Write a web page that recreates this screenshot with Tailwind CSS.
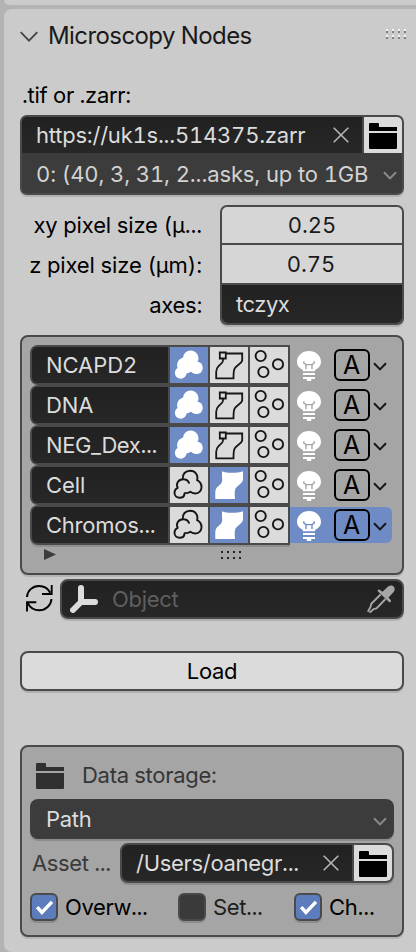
<!DOCTYPE html>
<html lang="en">
<head>
<meta charset="utf-8">
<title>Microscopy Nodes</title>
<script src="https://cdn.jsdelivr.net/npm/@tailwindcss/browser@4"></script>
</head>
<body class="w-[416px] h-[952px] overflow-hidden bg-[#b3b3b3] font-['Inter','Liberation_Sans',sans-serif] text-[22px] leading-[26px] tracking-[-0.3px] tabular-nums text-black whitespace-nowrap">
<svg class="hidden">
  <symbol id="folder" viewBox="0 0 28 26"><path d="M0 1a1 1 0 0 1 1-1h8a1 1 0 0 1 1 1v3h18v4H0zM0 10h28v15a1 1 0 0 1-1 1H1a1 1 0 0 1-1-1z" fill="currentColor"/></symbol>
  <symbol id="cross" viewBox="0 0 16 16"><path d="M.7.7l14.6 14.6M15.3.7L.7 15.3" stroke="#b4b4b4" stroke-width="1.6" fill="none"/></symbol>
  <symbol id="down" viewBox="0 0 14 9"><path d="M1 1.2l6 6.2 6-6.2" stroke="currentColor" stroke-width="2" fill="none"/></symbol>
  <symbol id="cloud-fill" viewBox="0 0 38 36"><g fill="#fff"><circle cx="20.7" cy="11.3" r="7.8"/><circle cx="14.5" cy="18" r="7.5"/><circle cx="26.5" cy="20.7" r="6.3"/><circle cx="10.7" cy="25.8" r="5.9"/><path d="M12 12h14v12l-6 1.2-8 3z"/></g></symbol>
  <symbol id="cloud-line" viewBox="0 0 38 36"><path d="M12.700 12.300C12.200 7 15.500 3.700 20.200 3.700c5 0 8.300 4.300 6.900 9.500 2.700 1.300 4.400 4 4.400 7 0 3.600-2.600 6.300-6 6.300-2 0-3.700-.8-5.200-1.800-1.900 1.200-3.700 1.600-5.700 1.400-.1 2.800-2.200 4.600-4.900 4.600-3 0-5.200-2.200-5.200-5 0-2.300 1.200-4 3.200-4.900C5.500 16.500 8.500 12.500 13 12.300c2.800-.1 5 1.200 6 3.500" fill="none" stroke="#161616" stroke-width="1.900" stroke-linecap="round" stroke-linejoin="round"/></symbol>
  <symbol id="surf-line" viewBox="0 0 38 36"><path d="M15.500 6.500h16.700v7c-.8 3.500-6.500 5-8 9-.7 2.500-.7 5.300-.7 8.800H6.200v-6.500c0-2.300.8-4.300 2.600-6 3-2.600 5-4 4.200-8M9.800 5.500h6v6h-6z" fill="none" stroke="#161616" stroke-width="1.800"/></symbol>
  <symbol id="surf-fill" viewBox="0 0 38 36"><path d="M12 4.200c4.500 2 15 2 21 0v8.300c-.5 4.500-6.500 6-7.800 10-.7 2.500-.5 6-.2 9.500H5.300v-6.500c0-3 1-4.700 3.200-6.500 3-2.600 4.500-4.500 3.500-8.500z" fill="#fff"/></symbol>
  <symbol id="points" viewBox="0 0 38 36"><g fill="none" stroke="#161616" stroke-width="1.900"><circle cx="10.700" cy="9" r="5.100"/><circle cx="28" cy="17.300" r="5.100"/><circle cx="13.400" cy="25" r="5.100"/></g></symbol>
  <symbol id="bulb" viewBox="0 0 24 30"><path d="M12 0c6.800 0 12 4.800 12 10.800 0 3.300-1.500 5.200-3.600 6.700-1.100.8-2.400 1-2.400 2.700H6c0-1.700-1.300-1.900-2.400-2.700C1.500 16 0 14.100 0 10.800 0 4.800 5.200 0 12 0zM6 22h12v2H6zM6 26h12v2h-3.800v1.900H9.800V28H6z" fill="#fff"/><path d="M6.800 10.200v1.800l2.200 1.600V18M17.200 10.200v1.800L15 13.600V18M9 13.600h6" fill="none" stroke="currentColor" stroke-width="1.400"/></symbol>
  <symbol id="tick" viewBox="0 0 24 24"><path d="M5.200 12.200l4.700 5.200L20 6.800" fill="none" stroke="#fff" stroke-width="3.400"/></symbol>
</svg>

<div class="h-[5px] ml-1 bg-[#cbcbcb] rounded-bl-[6px]"></div>

<main class="mt-1 ml-1 h-[943px] pl-4 pr-3 bg-[#cbcbcb] rounded-l-[8px]">
  <header class="h-[66px] flex items-start">
    <svg class="w-[18px] h-[11px] mt-[22px]" viewBox="0 0 18 11"><path d="M.7 1l8.300 8.600L17.300 1" fill="none" stroke="#444" stroke-width="1.800"/></svg>
    <h1 class="ml-[10px] mt-[12px] text-[24px] leading-[30px] tracking-[-0.58px] text-[#1a1a1a]">Microscopy Nodes</h1>
    <svg class="ml-auto -mr-[2px] w-[20px] h-[10px] mt-[20px]" viewBox="0 0 20 10" shape-rendering="crispEdges">
      <path d="M0 1h20M0 7h20" stroke="#f4f4f4" stroke-width="2" stroke-dasharray="2 4"/>
      <path d="M0 3h20M0 9h20" stroke="#808080" stroke-width="2" stroke-dasharray="2 4"/>
    </svg>
  </header>

  <div class="h-10 pt-[7px] pl-[2px]">.tif or .zarr:</div>

  <section class="h-20 rounded-[7px] border-2 border-[#4a4a4a] bg-[#3c3c3c] text-[#dcdcdc] overflow-hidden shadow-[0_2px_0_#b0b0b0]">
    <div class="h-9 flex items-center bg-linear-to-b from-[#212121] to-[#272727]">
      <span class="pl-[14px] w-[311px] tracking-[-0.23px]">https://uk1s...514375.zarr</span>
      <svg class="size-4"><use href="#cross"/></svg>
      <div class="ml-auto w-[40px] h-9 border-l-2 border-[#4a4a4a] bg-[#dbdbdb] text-black pt-[6px] pl-[5px]"><svg class="w-[28px] h-[26px]"><use href="#folder"/></svg></div>
    </div>
    <div class="h-10 flex items-center text-[#d2d2d2]">
      <span class="pl-[14px] w-[361px] pt-[1px] tracking-[-0.12px]">0: (40, 3, 31, 2...asks, up to 1GB</span>
      <svg class="w-[14px] h-[9px] mt-[5px] text-[#8a8a8a]"><use href="#down"/></svg>
    </div>
  </section>

  <section class="mt-[10px] flex h-[120px]">
    <div class="w-[182px] text-right">
      <div class="h-10 pt-[7px] tracking-[-0.15px]">xy pixel size (µ...</div>
      <div class="h-10 pt-[7px] tracking-[-0.13px]">z pixel size (µm):</div>
      <div class="h-10 pt-[7px]">axes:</div>
    </div>
    <div class="ml-[18px] w-[184px] h-[120px] rounded-[7px] border-2 border-[#4a4a4a] overflow-hidden bg-[#d6d6d6] shadow-[0_2px_0_#b0b0b0] text-[#1a1a1a]">
      <div class="h-[38px] pt-[5px] text-center tracking-[-0.1px] border-b-2 border-[#4a4a4a]">0.25</div>
      <div class="h-[40px] pt-[6px] pr-[2px] text-center tracking-[-0.1px] border-b-2 border-[#4a4a4a]">0.75</div>
      <div class="h-[38px] pt-[6px] pl-[14px] tracking-[-0.5px] bg-linear-to-b from-[#212121] to-[#272727] text-[#dcdcdc]">tczyx</div>
    </div>
  </section>

  <section class="mt-[10px] h-[240px] rounded-[8px] border-2 border-[#4a4a4a] bg-[#a5a5a5] pt-2 pl-2 shadow-[0_2px_0_#b4b4b4]">
    <div id="rows" class="shadow-[0_2px_0_#8f8f8f] w-[260px] rounded-bl-[8px]"></div>
    <div class="flex items-start pt-[4px]">
      <svg class="ml-[14px] w-[12px] h-[11px]" viewBox="0 0 12 11"><path d="M0 0l12 5.500L0 11z" fill="#3c3c3c"/></svg>
      <svg class="ml-[165px] mt-[2px] w-[20px] h-[8px]" viewBox="0 0 20 8" shape-rendering="crispEdges"><path d="M0 1h20M0 7h20" stroke="#222" stroke-width="2" stroke-dasharray="2 4"/></svg>
    </div>
  </section>

  <section class="mt-1 flex h-10">
    <svg class="ml-[5px] mt-[5px] w-[28px] h-[28px]" viewBox="0 0 28 28"><path d="M2 13C2.300 6.800 7.500 2 14 2c4.800 0 9 2.500 11.200 6.800M26.700 1v9H17M26.500 15c-.4 6.300-5.700 11.300-12.300 11.300-4.800 0-9-2.500-11.200-6.800M2 27.500v-9.300h9.300" fill="none" stroke="#000" stroke-width="1.900"/></svg>
    <div class="ml-[7px] w-[344px] h-10 flex rounded-[8px] border-2 border-[#4a4a4a] bg-linear-to-b from-[#212121] to-[#272727] shadow-[0_2px_0_#b0b0b0]">
      <svg class="ml-[8px] mt-[4px] w-[28px] h-[28px]" viewBox="0 0 28 28"><path d="M11 3v14h14M11 17l-8 8" fill="none" stroke="#dcdcdc" stroke-width="6" stroke-linecap="round" stroke-linejoin="round"/></svg>
      <span class="ml-[14px] mt-[5px] text-[#5f5f5f]">Object</span>
      <svg class="ml-auto mr-[7px] mt-[4px] w-[28px] h-[28px]" viewBox="0 0 28 28"><path d="M15.500 6.800L20.500 2c2.200-1.800 4.600-2 6.100-.6 1.600 1.600 1.400 4.100-.4 6.100l-4.700 5 2.200 2.600c1 1.300-.3 2.700-1.700 1.800L11 6.500c-.9-1.300.4-2.500 1.600-1.700z" fill="#a6a6a6"/><path d="M13.600 9.500L4.300 18.700l-.8 3.300L.8 26.800M18.500 14l-9 9.300-2.900.7-4 3.700" fill="none" stroke="#a6a6a6" stroke-width="1.900"/></svg>
    </div>
  </section>

  <button class="mt-8 block w-full h-10 rounded-[8px] border-2 border-[#4a4a4a] bg-[#dbdbdb] shadow-[0_2px_0_#b0b0b0]">Load</button>

  <section class="mt-[54px] h-[192px] rounded-[8px] border-2 border-[#4a4a4a] bg-[#a5a5a5] px-2 shadow-[0_2px_0_#b4b4b4]">
    <div class="h-[52px] flex text-[#303030]">
      <svg class="ml-[6px] mt-[16px] w-[28px] h-[26px]"><use href="#folder"/></svg>
      <span class="ml-[18px] mt-[15px] text-[#363636]">Data storage:</span>
    </div>
    <div class="h-10 flex items-center rounded-[8px] bg-[#3c3c3c] text-[#dcdcdc] shadow-[0_2px_0_#8c8c8c]">
      <span class="ml-4">Path</span>
      <svg class="ml-auto mr-[7px] mt-[4px] w-[14px] h-[9px] text-[#8a8a8a]"><use href="#down"/></svg>
    </div>
    <div class="mt-1 h-10 flex">
      <span class="w-[90px] pl-[2px] pt-[7px] tracking-[-0.35px] text-[#3a3a3a]">Asset ...</span>
      <div class="w-[274px] h-10 flex items-center rounded-[8px] border-2 border-[#4a4a4a] bg-linear-to-b from-[#212121] to-[#272727] text-[#dcdcdc] overflow-hidden shadow-[0_2px_0_#8c8c8c]">
        <span class="pl-[14px] w-[201px]">/Users/oanegr...</span>
        <svg class="size-4"><use href="#cross"/></svg>
        <div class="ml-auto w-[40px] h-9 border-l-2 border-[#4a4a4a] bg-[#dbdbdb] text-black pt-[6px] pl-[5px]"><svg class="w-[28px] h-[26px]"><use href="#folder"/></svg></div>
      </div>
    </div>
    <div class="mt-[10px] h-7 flex items-center">
      <div class="size-7 rounded-[6px] border-2 border-[#4a4a4a] bg-[#5c7cbc] shadow-[0_2px_0_#8c8c8c]"><svg class="size-6"><use href="#tick"/></svg></div>
      <span class="ml-[7px] w-[113px] tracking-[-0.4px]">Overw...</span>
      <div class="size-7 rounded-[6px] border-2 border-[#4a4a4a] bg-[#3a3a3a] shadow-[0_2px_0_#8c8c8c]"></div>
      <span class="ml-[7px] w-[81px] tracking-[-0.4px] text-[#1e1e1e]">Set...</span>
      <div class="size-7 rounded-[6px] border-2 border-[#4a4a4a] bg-[#5c7cbc] shadow-[0_2px_0_#8c8c8c]"><svg class="size-6"><use href="#tick"/></svg></div>
      <span class="ml-[7px] tracking-[-0.25px]">Ch...</span>
    </div>
  </section>
</main>

<script>
const channels = [
  ['NCAPD2', true, false, false],
  ['DNA', true, false, false],
  ['NEG_Dex...', true, false, false],
  ['Cell', false, true, false],
  ['Chromos...', false, true, true],
];
const cell = (on, fill, line) =>
  `<div class="w-10 h-9 border-r-2 border-[#4a4a4a] ${on ? 'bg-[#6e8bc6]' : 'bg-[#dbdbdb]'}"><svg class="w-[38px] h-9"><use href="#${on ? fill : line}"/></svg></div>`;
document.getElementById('rows').innerHTML = channels.map(([name, vol, surf, sel]) => `
  <div class="h-10 flex items-center w-[362px]">
    <div class="w-[260px] h-10 flex border-y-2 border-l-2 border-[#4a4a4a] rounded-l-[8px] bg-[#4a4a4a]">
      <div class="w-[138px] h-9 pl-[14px] pt-[5px] rounded-l-[5px] border-r-2 border-[#4a4a4a] bg-linear-to-b from-[#212121] to-[#272727] text-[#dcdcdc] ${name === 'NEG_Dex...' ? 'tracking-[-0.4px]' : name.length > 6 ? 'tracking-[-0.25px]' : 'tracking-[-0.05px]'}">${name}</div>
      ${cell(vol, 'cloud-fill', 'cloud-line')}${cell(surf, 'surf-fill', 'surf-line')}${cell(false, '', 'points')}
    </div>
    <div class="w-[102px] h-9 flex items-center rounded-r-[6px] ${sel ? 'bg-[#6e8bc6] text-[#6e8bc6]' : 'text-[#a5a5a5]'}">
      <svg class="ml-[7px] mt-[2px] w-[24px] h-[30px]"><use href="#bulb"/></svg>
      <div class="ml-[13px] w-9 h-8 pr-px rounded-[6px] border-2 border-black text-black text-center text-[25px] leading-[28px]">A</div>
      <svg class="ml-[3px] mt-[3px] w-[14px] h-[9px] text-[#161616]"><use href="#down"/></svg>
    </div>
  </div>`).join('');
</script>
</body>
</html>
